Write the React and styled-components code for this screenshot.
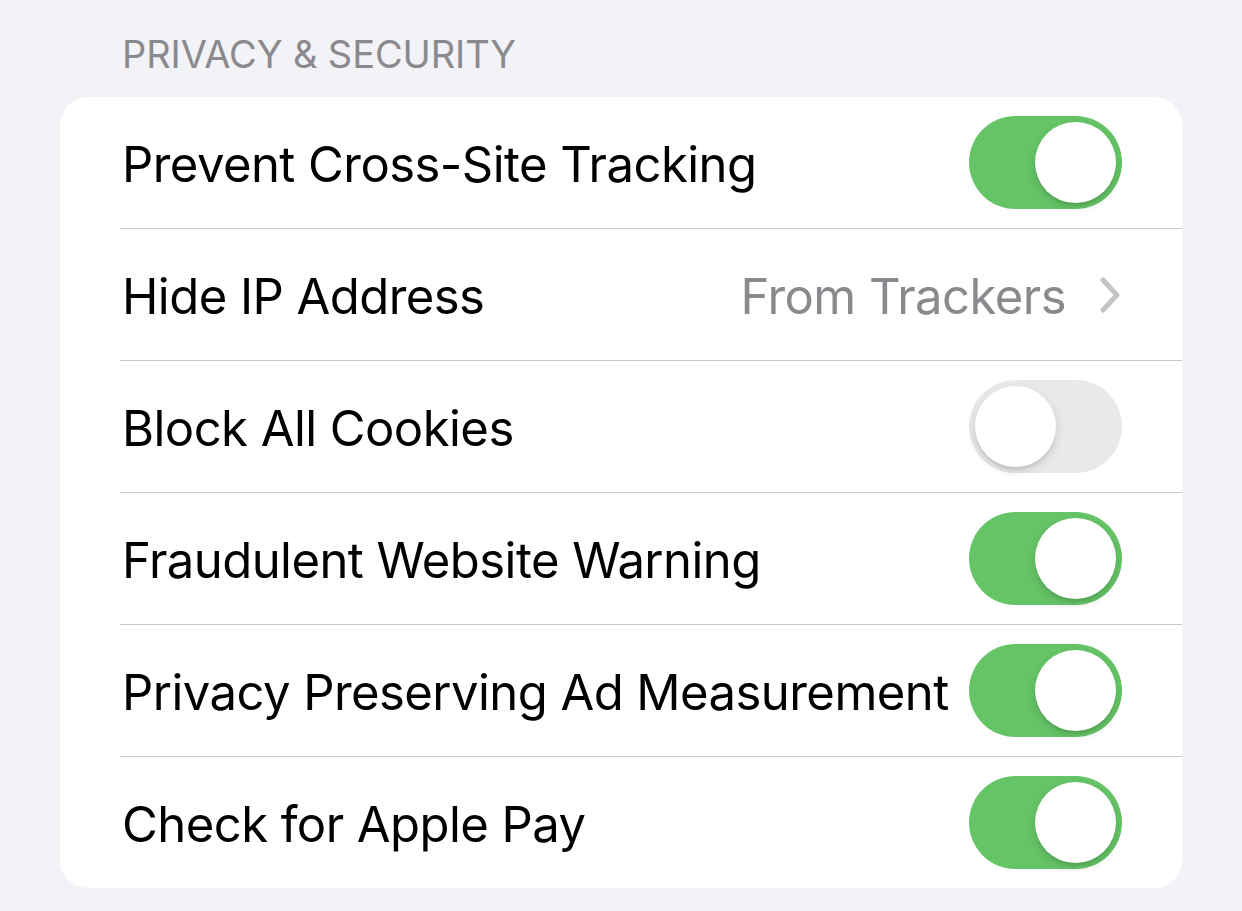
import styled, { createGlobalStyle } from "styled-components";

const GlobalStyle = createGlobalStyle`
  html, body {
    margin: 0;
    padding: 0;
    background: #f2f2f7;
  }
  body {
    font-family: Inter, "Noto Sans", "Liberation Sans", sans-serif;
    -webkit-font-smoothing: antialiased;
  }
`;

const Page = styled.div`
  display: flex;
  flex-direction: column;
  padding: 0 60px;
  min-height: 911px;
  box-sizing: border-box;
`;

const SectionHeader = styled.div`
  padding: 30px 0 0 62px;
  margin-bottom: 19px;
  font-size: 38px;
  line-height: 48px;
  color: #8a8a8e;
  letter-spacing: -0.1px;
  text-transform: uppercase;
`;

const Card = styled.div`
  background: #ffffff;
  border-radius: 28px;
  overflow: hidden;
`;

const Row = styled.div`
  padding-left: 60px;
`;

const RowInner = styled.div`
  display: flex;
  align-items: center;
  justify-content: space-between;
  height: 131px;
  padding-right: 60px;
  border-bottom: ${(p) => (p.$last ? "none" : "1px solid #c6c6c8")};
`;

const Label = styled.span`
  font-size: 49px;
  color: #000000;
  letter-spacing: -0.55px;
  padding: 4px 0 0 2px;
  white-space: nowrap;
`;

const Detail = styled.div`
  display: flex;
  align-items: center;
  gap: 34px;
  padding-right: 2px;
`;

const Value = styled.span`
  font-size: 49px;
  color: #8a8a8e;
  letter-spacing: -0.55px;
  padding-top: 4px;
`;

const Track = styled.div`
  position: relative;
  width: 153px;
  height: 93px;
  border-radius: 47px;
  flex-shrink: 0;
  background: ${(p) => (p.$on ? "#65c466" : "#e9e9eb")};
`;

const Knob = styled.div`
  position: absolute;
  top: 6px;
  left: ${(p) => (p.$on ? "66px" : "6px")};
  width: 81px;
  height: 81px;
  border-radius: 50%;
  background: #ffffff;
  box-shadow: 0 4px 10px rgba(0, 0, 0, 0.14), 0 3px 1px rgba(0, 0, 0, 0.05);
`;

function Toggle({ on }) {
  return (
    <Track $on={on}>
      <Knob $on={on} />
    </Track>
  );
}

function Chevron() {
  return (
    <svg width="20" height="36" viewBox="0 0 20 36">
      <polyline
        points="3,3 17,18 3,33"
        fill="none"
        stroke="#c4c4c6"
        strokeWidth="5"
        strokeLinecap="round"
        strokeLinejoin="round"
      />
    </svg>
  );
}

const rows = [
  { label: "Prevent Cross-Site Tracking", on: true },
  { label: "Hide IP Address", value: "From Trackers" },
  { label: "Block All Cookies", on: false },
  { label: "Fraudulent Website Warning", on: true },
  { label: "Privacy Preserving Ad Measurement", on: true },
  { label: "Check for Apple Pay", on: true },
];

export default function App() {
  return (
    <>
      <GlobalStyle />
      <Page>
        <SectionHeader>Privacy &amp; Security</SectionHeader>
        <Card>
          {rows.map((r, i) => (
            <Row key={r.label}>
              <RowInner $last={i === rows.length - 1}>
                <Label>{r.label}</Label>
                {r.value ? (
                  <Detail>
                    <Value>{r.value}</Value>
                    <Chevron />
                  </Detail>
                ) : (
                  <Toggle on={r.on} />
                )}
              </RowInner>
            </Row>
          ))}
        </Card>
      </Page>
    </>
  );
}
